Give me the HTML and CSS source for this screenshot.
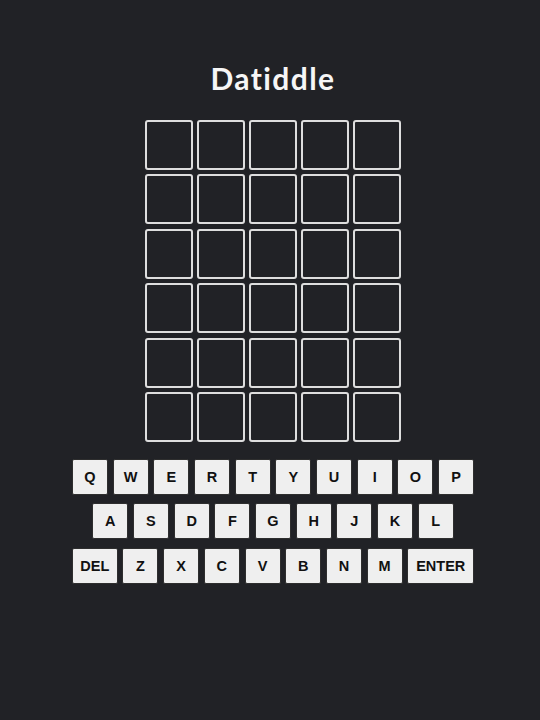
FILE: index.html
```html
<!DOCTYPE html>
<html lang="en">
<head>
<meta charset="utf-8">
<title>Datiddle</title>
<link rel="stylesheet" href="styles.css">
</head>
<body>
<div class="app">
  <h1 class="title">Datiddle</h1>
  <div class="board">
    <div class="tile"></div><div class="tile"></div><div class="tile"></div><div class="tile"></div><div class="tile"></div>
    <div class="tile"></div><div class="tile"></div><div class="tile"></div><div class="tile"></div><div class="tile"></div>
    <div class="tile"></div><div class="tile"></div><div class="tile"></div><div class="tile"></div><div class="tile"></div>
    <div class="tile"></div><div class="tile"></div><div class="tile"></div><div class="tile"></div><div class="tile"></div>
    <div class="tile"></div><div class="tile"></div><div class="tile"></div><div class="tile"></div><div class="tile"></div>
    <div class="tile"></div><div class="tile"></div><div class="tile"></div><div class="tile"></div><div class="tile"></div>
  </div>
  <div class="keyboard">
    <div class="key-row">
      <button class="key">Q</button><button class="key">W</button><button class="key">E</button><button class="key">R</button><button class="key">T</button><button class="key">Y</button><button class="key">U</button><button class="key">I</button><button class="key">O</button><button class="key">P</button>
    </div>
    <div class="key-row">
      <button class="key">A</button><button class="key">S</button><button class="key">D</button><button class="key">F</button><button class="key">G</button><button class="key">H</button><button class="key">J</button><button class="key">K</button><button class="key">L</button>
    </div>
    <div class="key-row">
      <button class="key key-del">DEL</button><button class="key">Z</button><button class="key">X</button><button class="key">C</button><button class="key">V</button><button class="key">B</button><button class="key">N</button><button class="key">M</button><button class="key key-enter">ENTER</button>
    </div>
  </div>
</div>
</body>
</html>
```
FILE: styles.css
```css
html, body {
  margin: 0;
  padding: 0;
  background: #212226;
}

.app {
  display: flex;
  flex-direction: column;
  align-items: center;
  padding-left: 6px;
  padding-top: 58px;
}

.title {
  margin: 0;
  font-family: Lato, "Open Sans", sans-serif;
  font-weight: 700;
  font-size: 30px;
  letter-spacing: 1.4px;
  line-height: 40px;
  color: #f6f6f6;
}

.board {
  margin-top: 22px;
  display: grid;
  grid-template-columns: repeat(5, 48px);
  grid-auto-rows: 50px;
  column-gap: 4px;
  row-gap: 4.4px;
}

.tile {
  box-sizing: border-box;
  border: 2px solid #dedede;
  border-radius: 3px;
}

.keyboard {
  margin-top: 17px;
  display: flex;
  flex-direction: column;
  align-items: center;
  gap: 8.5px;
}

.key-row {
  display: flex;
  gap: 4.7px;
}

.key {
  box-sizing: border-box;
  width: 36px;
  height: 36px;
  padding: 0;
  margin: 0;
  background: #efefef;
  border: 1px solid #2e2e2e;
  border-radius: 2px;
  font-family: "Liberation Sans", Arial, sans-serif;
  font-weight: 700;
  font-size: 14.5px;
  color: #111;
}

.key-del {
  width: 46px;
}

.key-enter {
  width: 67px;
}
```
